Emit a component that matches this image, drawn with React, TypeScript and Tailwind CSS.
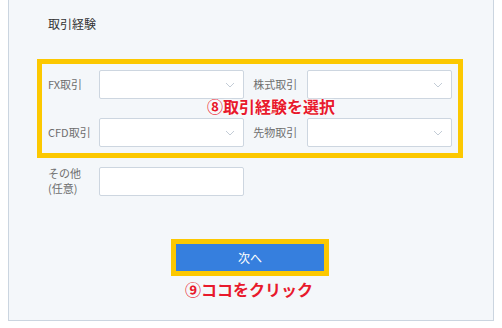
const FONT = { fontFamily: '"Noto Sans CJK JP", "Noto Sans", sans-serif' };

function Chevron() {
  return (
    <svg width="10" height="6" viewBox="0 0 10 6" className="text-[#c3ccd6]">
      <path d="M1 1l4 4 4-4" fill="none" stroke="currentColor" strokeWidth="1" />
    </svg>
  );
}

function Select() {
  return (
    <div className="w-[145px] h-[29px] bg-white border border-[#cdd6e0] rounded-[2px] flex items-center justify-end pr-[8px]">
      <Chevron />
    </div>
  );
}

function Label({ children, right }: { children: React.ReactNode; right?: boolean }) {
  return (
    <div className={`text-[11px] leading-[15px] text-[#6e6e6e] ${right ? "w-[64px] text-right pr-[10px]" : "w-[51px]"}`}>
      {children}
    </div>
  );
}

export default function App() {
  return (
    <div className="w-[502px] h-[328px] bg-white overflow-hidden" style={FONT}>
      <div className="ml-[8px] w-[486px] h-[321px] bg-[#f4f7fa] border-x border-b border-[#cbd5e0] relative">
        <div className="pl-[39px] pt-[15px] text-[12px] leading-[18px] text-[#333]">取引経験</div>

        <div className="mt-[26px] ml-[28px] w-[426px] h-[99px] border-[5px] border-[#fcc800] px-[6px] pt-[6px] flex flex-col gap-[19px]">
          <div className="flex items-center">
            <Label>FX取引</Label>
            <Select />
            <Label right>株式取引</Label>
            <Select />
          </div>
          <div className="flex items-center">
            <Label>CFD取引</Label>
            <Select />
            <Label right>先物取引</Label>
            <Select />
          </div>
        </div>

        <div className="mt-[8px] ml-[39px] flex items-center">
          <Label>
            その他
            <br />
            (任意)
          </Label>
          <div className="w-[145px] h-[29px] bg-white border border-[#cdd6e0] rounded-[2px]" />
        </div>

        <div className="mt-[43px] ml-[162px] w-[158px] h-[37px] border-[5px] border-[#fcc800]">
          <button className="w-full h-full bg-[#367fde] text-white text-[12px] flex items-center justify-center">次へ</button>
        </div>
        <div className="mt-[3px] ml-[176px] text-[16px] leading-[20px] font-bold text-[#e8192c]">⑨ココをクリック</div>

        <div className="absolute left-[198px] top-[96px] text-[16px] leading-[20px] font-bold text-[#e8192c] [text-shadow:0_0_2px_#fff,0_0_2px_#fff]">
          ⑧取引経験を選択
        </div>
      </div>
    </div>
  );
}
